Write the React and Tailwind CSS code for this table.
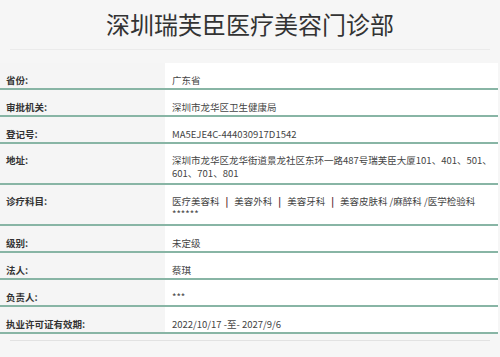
const rows = [
  { label: "省份:", value: "广东省" },
  { label: "审批机关:", value: "深圳市龙华区卫生健康局" },
  { label: "登记号:", value: "MA5EJE4C-444030917D1542" },
  {
    label: "地址:",
    value: (
      <>
        深圳市龙华区龙华街道景龙社区东环一路487号瑞芙臣大厦101、401、501、
        <br />
        601、701、801
      </>
    ),
    tall: true,
  },
  {
    label: "诊疗科目:",
    value: (
      <>
        医疗美容科<Sep />美容外科<Sep />美容牙科<Sep />美容皮肤科 /麻醉科 /医学检验科
        <br />
        ******
      </>
    ),
    tall: true,
  },
  { label: "级别:", value: "未定级" },
  { label: "法人:", value: "蔡琪" },
  { label: "负责人:", value: "***" },
  { label: "执业许可证有效期:", value: "2022/10/17 -至- 2027/9/6" },
];

function Sep() {
  return <span className="mx-[6px] font-bold text-[#5b2b2e]">|</span>;
}

export default function App() {
  return (
    <div className="w-[500px] h-[357px] overflow-hidden bg-[#f6f6f6] font-['Noto_Sans_CJK_SC',sans-serif]">
      <div className="mx-[10px] h-[50px] border-b border-[#ebebeb] flex items-center justify-center text-[24px] leading-[30px] text-[#333] pb-[1px]">
        深圳瑞芙臣医疗美容门诊部
      </div>
      <div className="mt-[13px] w-[498px]">
        {rows.map((r, i) => (
          <div
            key={i}
            className={
              "grid grid-cols-[165px_1fr] border-b-2 border-[#88b5a5] text-[9.5px] " +
              (r.tall ? "leading-[13px]" : "leading-[12px]")
            }
          >
            <div
              className={
                "bg-[#f5f5f5] pl-[6px] font-bold text-[#333] " +
                (r.tall ? "pt-[10px] pb-[3px]" : "pt-[11px] pb-[2px]")
              }
            >
              {r.label}
            </div>
            <div
              className={
                "bg-white pl-[7px] text-[#444] whitespace-nowrap " +
                (r.tall ? "pt-[10px] pb-[3px]" : "pt-[11px] pb-[2px]")
              }
            >
              {r.value}
            </div>
          </div>
        ))}
      </div>
      <div className="mx-[10px] mt-[6px] border-t border-[#e2e2e2]" />
    </div>
  );
}
